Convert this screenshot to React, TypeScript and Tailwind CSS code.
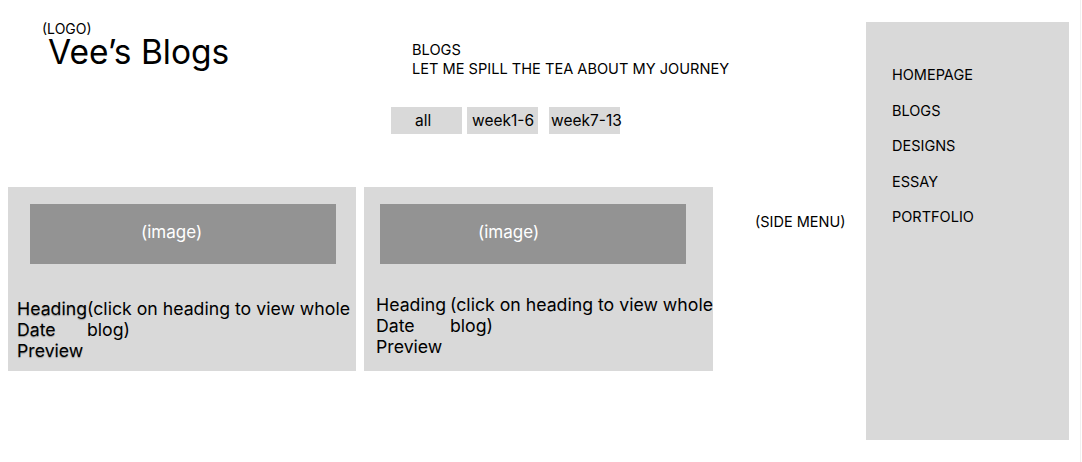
const filters = [
  { label: "all", pad: "pl-[24px]", gap: "ml-0" },
  { label: "week1-6", pad: "pl-[5px]", gap: "ml-[5px]" },
  { label: "week7-13", pad: "pl-[2px]", gap: "ml-[11px]" },
];

const posts = [
  {
    id: 1,
    card: "w-[348px]",
    imgBox: "ml-[22px]",
    imgLabel: "pl-[111px]",
    textBox: "pl-[9px] mt-[34px]",
    firstCol: "w-[70px] [text-shadow:0_1px_1px_rgba(0,0,0,0.3)]",
  },
  {
    id: 2,
    card: "w-[349px]",
    imgBox: "ml-[16px]",
    imgLabel: "pl-[98px]",
    textBox: "pl-[12px] mt-[30px]",
    firstCol: "w-[74px]",
  },
];

const menu = ["HOMEPAGE", "BLOGS", "DESIGNS", "ESSAY", "PORTFOLIO"];

function PostCard({ post }: { post: (typeof posts)[number] }) {
  return (
    <div className={`${post.card} h-[184px] bg-[#d9d9d9] pt-[17px]`}>
      <div
        className={`${post.imgBox} w-[306px] h-[60px] bg-[#939393] text-white text-[17px] leading-[21px] pt-[18px] ${post.imgLabel}`}
      >
        (image)
      </div>
      <div className={`flex text-[17.7px] leading-[21px] text-black ${post.textBox}`}>
        <div className={`flex flex-col ${post.firstCol}`}>
          <span>Heading</span>
          <span>Date</span>
          <span>Preview</span>
        </div>
        <div className="whitespace-nowrap">
          (click on heading to view whole
          <br />
          blog)
        </div>
      </div>
    </div>
  );
}

export default function App() {
  return (
    <div className="w-[1081px] h-[462px] bg-white border-r border-[#f0f0f0] flex font-['Inter',sans-serif] text-black">
      <main className="w-[866px] flex flex-col">
        {/* header */}
        <header className="flex h-[79px]">
          <div className="w-[412px] pl-[42px] pt-[22px]">
            <p className="text-[14px] leading-[14px]">(LOGO)</p>
            <h1 className="ml-[6px] mt-[1px] text-[33.5px] leading-[30px]">Vee’s Blogs</h1>
          </div>
          <div className="pt-[41px] text-[14.6px] leading-[19px]">
            <p>BLOGS</p>
            <p>LET ME SPILL THE TEA ABOUT MY JOURNEY</p>
          </div>
        </header>

        {/* filters */}
        <div className="flex ml-[391px] mt-[28px]">
          {filters.map((f) => (
            <button
              key={f.label}
              className={`w-[71px] h-[27px] bg-[#d9d9d9] text-left text-[15.5px] leading-[27px] whitespace-nowrap ${f.pad} ${f.gap}`}
            >
              {f.label}
            </button>
          ))}
        </div>

        {/* posts */}
        <div className="flex items-start mt-[53px] ml-[8px] gap-[8px]">
          {posts.map((p) => (
            <PostCard key={p.id} post={p} />
          ))}
          <p className="ml-[34px] mt-[26px] text-[14.5px] leading-[18px] whitespace-nowrap">
            (SIDE MENU)
          </p>
        </div>
      </main>

      <aside className="w-[203px] h-[418px] mt-[22px] bg-[#d9d9d9] pl-[26px] pt-[44px]">
        <nav className="flex flex-col gap-[17.5px] text-[14.5px] leading-[18px]">
          {menu.map((m) => (
            <a key={m}>{m}</a>
          ))}
        </nav>
      </aside>
    </div>
  );
}
